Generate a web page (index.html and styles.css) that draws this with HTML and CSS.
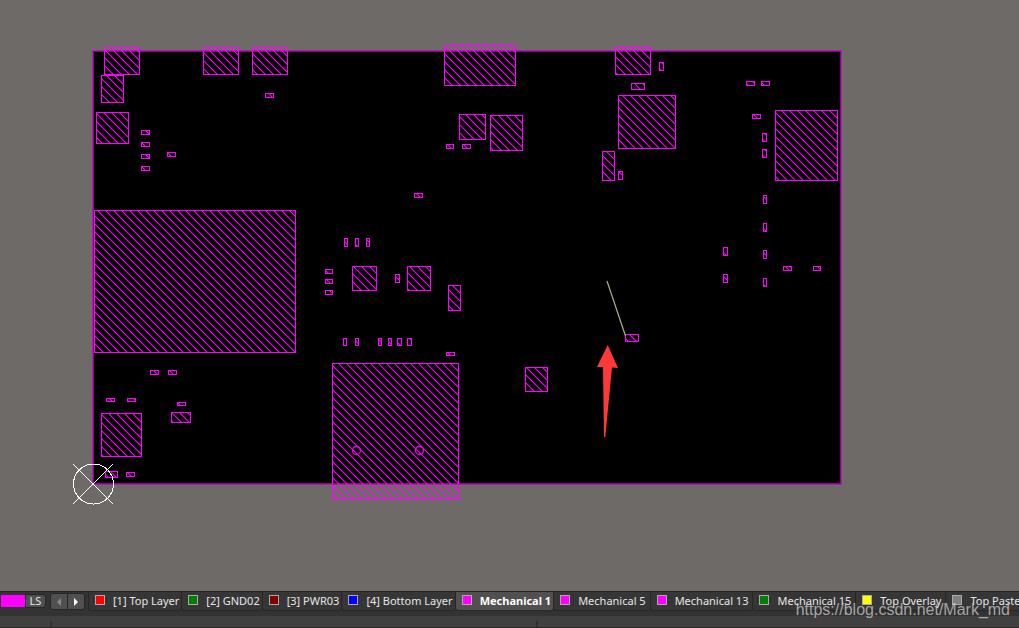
FILE: index.html
```html
<!DOCTYPE html>
<html lang="en">
<head>
<meta charset="utf-8">
<title>PCB Editor</title>
<link rel="stylesheet" href="styles.css">
</head>
<body>
<main class="workspace">
<svg class="board" viewBox="0 0 1019 591" role="img" aria-label="Board layout">
  <defs>
    <pattern id="hatch" width="8" height="8" patternUnits="userSpaceOnUse" patternTransform="translate(-.5 -.5)">
      <path class="hatch" d="M-2 -1L9 10M6 -1L9 2M-2 7L1 10"/>
    </pattern>
  </defs>
  <rect class="outline" x="93" y="51" width="748" height="433"/>
  <g class="parts" transform="translate(.5 .5)">
    <rect x="104" y="47" width="35" height="27"/>
    <rect x="203" y="47" width="35" height="27"/>
    <rect x="252" y="47" width="35" height="27"/>
    <rect x="101" y="75" width="22" height="27"/>
    <rect x="96" y="112" width="32" height="31"/>
    <rect x="141" y="130" width="8" height="4"/>
    <rect x="141" y="142" width="8" height="4"/>
    <rect x="141" y="154" width="8" height="4"/>
    <rect x="141" y="166" width="8" height="4"/>
    <rect x="167" y="152" width="8" height="4"/>
    <rect x="265" y="93" width="8" height="4"/>
    <rect x="444" y="45" width="71" height="40"/>
    <rect x="459" y="114" width="26" height="25"/>
    <rect x="490" y="115" width="32" height="35"/>
    <rect x="446" y="144" width="7" height="4"/>
    <rect x="462" y="144" width="8" height="4"/>
    <rect x="414" y="193" width="8" height="4"/>
    <rect x="615" y="46" width="35" height="28"/>
    <rect x="659" y="62" width="4" height="8"/>
    <rect x="631" y="83" width="13" height="6"/>
    <rect x="618" y="95" width="57" height="53"/>
    <rect x="602" y="151" width="12" height="29"/>
    <rect x="618" y="171" width="4" height="8"/>
    <rect x="746" y="81" width="8" height="4"/>
    <rect x="761" y="81" width="8" height="4"/>
    <rect x="752" y="114" width="8" height="4"/>
    <rect x="762" y="133" width="4" height="8"/>
    <rect x="762" y="149" width="4" height="8"/>
    <rect x="775" y="110" width="62" height="70"/>
    <rect x="763" y="195" width="3" height="8"/>
    <rect x="763" y="223" width="3" height="8"/>
    <rect x="763" y="250" width="3" height="8"/>
    <rect x="763" y="278" width="3" height="8"/>
    <rect x="723" y="247" width="4" height="8"/>
    <rect x="723" y="274" width="4" height="8"/>
    <rect x="783" y="266" width="8" height="4"/>
    <rect x="813" y="266" width="7" height="4"/>
    <rect x="625" y="334" width="13" height="7"/>
    <rect x="94" y="210" width="201" height="142"/>
    <rect x="150" y="370" width="8" height="4"/>
    <rect x="168" y="370" width="8" height="4"/>
    <rect x="106" y="398" width="8" height="3"/>
    <rect x="127" y="398" width="8" height="3"/>
    <rect x="177" y="402" width="8" height="3"/>
    <rect x="171" y="412" width="19" height="10"/>
    <rect x="101" y="413" width="40" height="43"/>
    <rect x="105" y="471" width="12" height="6"/>
    <rect x="126" y="472" width="8" height="4"/>
    <rect x="344" y="238" width="3" height="8"/>
    <rect x="355" y="238" width="3" height="8"/>
    <rect x="366" y="238" width="3" height="8"/>
    <rect x="352" y="266" width="24" height="24"/>
    <rect x="407" y="266" width="23" height="24"/>
    <rect x="395" y="274" width="4" height="8"/>
    <rect x="325" y="269" width="7" height="4"/>
    <rect x="325" y="279" width="7" height="4"/>
    <rect x="325" y="290" width="7" height="4"/>
    <rect x="448" y="285" width="12" height="25"/>
    <rect x="343" y="338" width="3" height="7"/>
    <rect x="355" y="338" width="3" height="7"/>
    <rect x="378" y="338" width="3" height="7"/>
    <rect x="388" y="338" width="3" height="7"/>
    <rect x="397" y="338" width="4" height="7"/>
    <rect x="407" y="338" width="4" height="7"/>
    <rect x="446" y="352" width="8" height="3"/>
    <rect x="332" y="363" width="126" height="136"/>
    <rect x="525" y="367" width="22" height="24"/>
  </g>
  <g class="holes">
    <circle cx="356.5" cy="450.5" r="4"/>
    <circle cx="419.5" cy="450.5" r="4"/>
  </g>
  <g class="origin">
    <circle cx="93.5" cy="484" r="20"/>
    <path d="M73 464L113 504M113 464L73 504"/>
  </g>
  <path class="net" d="M607 281L625.5 336"/>
  <path class="arrow" d="M607.7 345L618 368L612 367.500L605.300 437H604L603 367H597Z"/>
</svg>
</main>
<footer class="footer">
  <nav class="layers" aria-label="Layers">
    <span class="current"></span>
    <button class="set" type="button">LS</button>
    <div class="scroll">
      <button type="button" aria-label="Previous layers"><svg viewBox="0 0 6 8"><path class="dim" d="M5 0V8L1 4Z"/></svg></button>
      <button type="button" aria-label="Next layers"><svg viewBox="0 0 6 8"><path class="lit" d="M1 0V8L5 4Z"/></svg></button>
    </div>
    <div class="tabs">
      <button class="tab signal" type="button"><i class="swatch red"></i>[1] Top Layer</button>
      <button class="tab signal" type="button"><i class="swatch green"></i>[2] GND02</button>
      <button class="tab signal" type="button"><i class="swatch maroon"></i>[3] PWR03</button>
      <button class="tab signal" type="button"><i class="swatch blue"></i>[4] Bottom Layer</button>
      <button class="tab active" type="button"><i class="swatch magenta"></i>Mechanical 1</button>
      <button class="tab" type="button"><i class="swatch magenta"></i>Mechanical 5</button>
      <button class="tab" type="button"><i class="swatch magenta"></i>Mechanical 13</button>
      <button class="tab" type="button"><i class="swatch green"></i>Mechanical 15</button>
      <button class="tab" type="button"><i class="swatch yellow"></i>Top Overlay</button>
      <button class="tab" type="button"><i class="swatch gray"></i>Top Paste</button>
    </div>
  </nav>
  <div class="status"><span class="cell first"></span><span class="cell second"></span></div>
  <span class="watermark">https://blog.csdn.net/Mark_md</span>
</footer>
</body>
</html>
```

FILE: styles.css
```css
* { box-sizing: border-box; }
body {
  margin: 0;
  height: 100vh;
  display: flex;
  flex-direction: column;
  overflow: hidden;
  background: #6e6a68;
  font-family: "Noto Sans", sans-serif;
  font-size: 11px;
  color: #e6e6e6;
}
.workspace { flex: 1; min-height: 0; }
.board { display: block; width: 100%; height: 100%; }
.outline { fill: #000; stroke: rgba(200, 0, 200, .7); stroke-width: 2; }
.hatch { fill: none; stroke: #f0f; stroke-width: 1.1; }
.parts { fill: url(#hatch); stroke: #f0f; }
.holes { fill: none; stroke: #f000f0; stroke-width: 1.3; }
.origin { fill: none; stroke: #fff; shape-rendering: crispEdges; }
.net { stroke: #b0b088; stroke-width: 1.2; }
.arrow { fill: #ff3838; }

.footer { position: relative; flex: none; }
.layers {
  display: flex;
  height: 25px;
  padding: 0 0 5px 1px;
  background: #333;
  border-top: 1px solid #222;
}
button {
  margin: 0;
  padding: 0;
  border: 0;
  background: none;
  font: inherit;
  color: inherit;
}
.current { width: 24px; height: 12px; margin-top: 3px; background: #f0f; flex: none; }
.set {
  width: 21px;
  height: 14px;
  margin: 2px 4px 0 0;
  line-height: 12px;
  background: #505050;
  border: 1px solid #262626;
  border-radius: 0 3px 3px 0;
  flex: none;
}
.scroll {
  display: flex;
  flex: none;
  width: 35px;
  height: 17px;
  margin: 1px 3px 0 0;
  background: #505050;
  border: 1px solid #262626;
  border-radius: 3px;
}
.scroll button { flex: 1; display: flex; align-items: center; justify-content: center; }
.scroll button + button { border-left: 1px solid #262626; }
.scroll svg { width: 6px; height: 8px; }
.dim { fill: #888; }
.lit { fill: #fff; }
.tabs { display: flex; flex: 1; min-width: 0; overflow: hidden; }
.tab {
  display: flex;
  align-items: center;
  flex: none;
  height: 19px;
  padding: 0 4px 1px 6px;
  white-space: nowrap;
  background: #363636;
  border: 1px solid #262626;
  border-top: 0;
  border-right: 0;
  border-radius: 0 0 3px 3px;
}
.tab.signal { padding-right: 2px; }
.tab.active { padding-right: 2px; background: #505050; color: #fff; font-weight: bold; }
.swatch { width: 10px; height: 10px; margin: 0 8px 2px 0; border: 1px solid #aaa; }
.red { background: #f00; }
.green { background: #008000; }
.maroon { background: #800000; }
.blue { background: #00f; }
.magenta { background: #f0f; }
.yellow { background: #ff0; }
.gray { background: #808080; }
.status {
  display: flex;
  height: 12px;
  padding-top: 5px;
  background: #404040;
  border-bottom: 1px solid #2c2828;
}
.cell { border-right: 2px solid #303030; }
.first { width: 5.1%; }
.second { width: 47.7%; }
.watermark {
  position: absolute;
  right: 9px;
  bottom: 9px;
  font: 16px/18px "Liberation Sans", Arial, sans-serif;
  color: rgba(205, 205, 205, .75);
  pointer-events: none;
}
```
